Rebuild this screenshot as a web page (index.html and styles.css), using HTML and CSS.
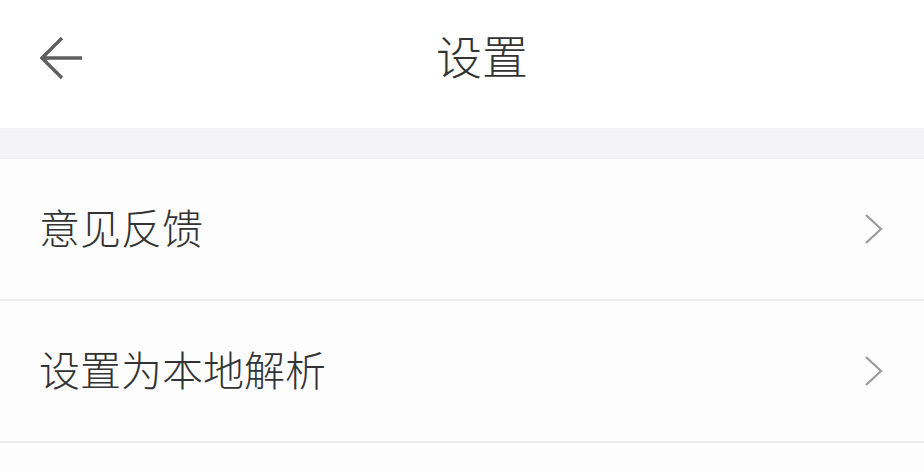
FILE: index.html
```html
<!DOCTYPE html>
<html>
<head>
<meta charset="utf-8">
<title>设置</title>
<link rel="stylesheet" href="styles.css">
</head>
<body>

<!-- top bar -->
<div class="top-bar">
    <a class="back-button" href="#">
        <svg width="44" height="44" viewBox="0 0 44 44">
            <path d="M22 1 L2 21 L22 41 M2 21 H42" fill="none" stroke="#5f5f5f" stroke-width="3.4"/>
        </svg>
    </a>
    <h1 class="page-title">设置</h1>
</div>

<!-- spacer band -->
<div class="section-gap"></div>

<!-- settings list -->
<div class="settings-list">
    <a class="settings-row" href="#">
        <span class="row-label">意见反馈</span>
        <svg class="row-arrow" width="20" height="30" viewBox="0 0 20 30">
            <path d="M2 1 L17 15 L2 29" fill="none" stroke="#9a9a9a" stroke-width="2.2"/>
        </svg>
    </a>
    <a class="settings-row" href="#">
        <span class="row-label">设置为本地解析</span>
        <svg class="row-arrow" width="20" height="30" viewBox="0 0 20 30">
            <path d="M2 1 L17 15 L2 29" fill="none" stroke="#9a9a9a" stroke-width="2.2"/>
        </svg>
    </a>
</div>

</body>
</html>
```

FILE: styles.css
```css
body {
    margin: 0;
    background-color: #fefdfe;
    font-family: "Noto Sans CJK SC", "Noto Sans", sans-serif;
    color: #333333;
}

a {
    text-decoration: none;
    color: inherit;
}

.top-bar {
    position: relative;
    height: 128px;
    background-color: #ffffff;
    display: flex;
    align-items: center;
    justify-content: center;
    padding-left: 40px;
}

.back-button {
    position: absolute;
    left: 40px;
    top: 37px;
    display: flex;
}

.page-title {
    margin: 0;
    font-size: 46px;
    font-weight: 300;
    color: #333333;
    line-height: 1;
    padding-bottom: 20px;
}

.section-gap {
    height: 29px;
    background-color: #f4f4f6;
    border-top: 1px solid #efeff1;
    border-bottom: 1px solid #ececee;
}

.settings-list {
    background-color: #fefdfe;
}

.settings-row {
    display: flex;
    align-items: center;
    justify-content: space-between;
    height: 140px;
    padding: 0 40px 0 39px;
    border-bottom: 2px solid #ececec;
}

.row-label {
    font-size: 41px;
    font-weight: 300;
    color: #333333;
    line-height: 1;
    padding-bottom: 5px;
}

.row-arrow {
    flex: none;
}
```
